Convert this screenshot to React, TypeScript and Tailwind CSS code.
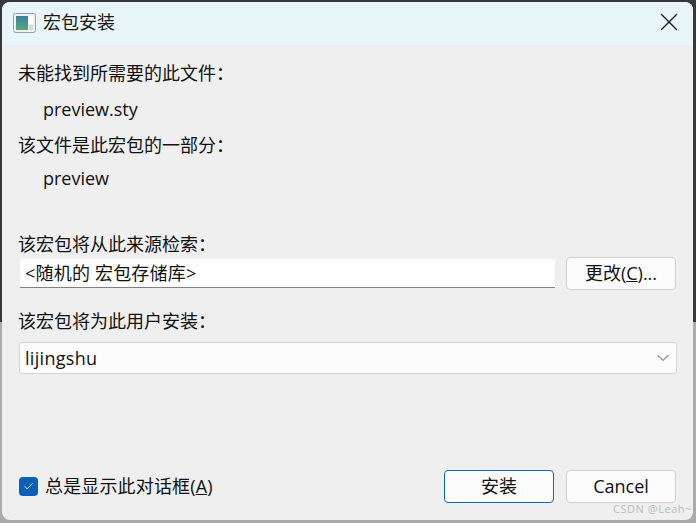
import { ChevronDown, X, Check } from "lucide-react";

const font = "font-['Open_Sans','Noto_Sans_CJK_SC',sans-serif]";

function Label({ children, className = "" }: { children: React.ReactNode; className?: string }) {
  return <div className={`text-[18px] leading-[24px] text-[#111] ${className}`}>{children}</div>;
}

export default function App() {
  return (
    <div className={`${font} h-[523px] w-[696px] overflow-hidden bg-[linear-gradient(#383838_0,#383838_322px,#ababab_322px)] pl-[2px] pr-[3px] pt-[2px] pb-[3px]`}>
      <div className="flex h-full flex-col overflow-hidden rounded-[8px] bg-[#efefef]">
        <div className="flex h-[43px] shrink-0 items-center bg-[#e8f6f9] pb-[2px] pl-[11px] pr-[9px]">
          <svg width="24" height="22" viewBox="0 0 24 22">
            <defs>
              <linearGradient id="pane" x1="0" y1="0" x2="0" y2="1">
                <stop offset="0" stopColor="#3f7fa0" />
                <stop offset="1" stopColor="#55a878" />
              </linearGradient>
            </defs>
            <rect x="0.5" y="1.5" width="22" height="19" rx="2" fill="#eef1f1" stroke="#9aa0a4" />
            <rect x="3" y="4" width="12" height="14" fill="url(#pane)" />
            <rect x="16" y="4" width="4" height="8" fill="#ffffff" />
            <rect x="16" y="13" width="4" height="5" fill="#d5d9d9" />
          </svg>
          <span className="ml-[6px] text-[18px] text-[#1a1a1a]">宏包安装</span>
          <X className="ml-auto -mt-[1px] text-[#1a1a1a]" size={30} strokeWidth={1.1} />
        </div>
        <div className="flex flex-1 flex-col pl-[16px] pr-[17px]">
          <Label className="mt-[16px]">未能找到所需要的此文件：</Label>
          <Label className="mt-[12px] pl-[25px]">preview.sty</Label>
          <Label className="mt-[12px]">该文件是此宏包的一部分：</Label>
          <Label className="mt-[9px] pl-[25px]">preview</Label>
          <Label className="mt-[42px]">该宏包将从此来源检索：</Label>
          <div className="mt-[1px] ml-[2px] flex items-center gap-[11px]">
            <div className="flex h-[29px] w-[535px] items-center border-b border-[#808080] bg-white pl-[5px] text-[18px] text-[#111]">
              <span className="tracking-[0.2px]">&lt;随机的 宏包存储库&gt;</span>
            </div>
            <button className="flex h-[33px] w-[110px] items-center justify-center rounded-[4px] border border-[#d0d0d0] bg-[#fbfbfb] text-[18px] text-[#111]">
              更改(<span className="underline">C</span>)...
            </button>
          </div>
          <Label className="mt-[19px]">该宏包将为此用户安装：</Label>
          <div className="mt-[9px] ml-[1px] flex h-[32px] w-[658px] items-center justify-between rounded-[3px] border border-[#d4d4d4] bg-[#fcfcfc] pl-[5px] pr-[3px] text-[18px] text-[#111]">
            <span className="tracking-[0.3px]">lijingshu</span>
            <ChevronDown size={20} strokeWidth={1.2} className="text-[#444]" />
          </div>
          <div className="mt-auto mb-[17px] flex items-center">
            <span className="ml-[1px] flex h-[19px] w-[19px] items-center justify-center rounded-[4px] bg-[#0a5fb8] text-white">
              <Check size={11} strokeWidth={2} />
            </span>
            <span className="ml-[7px] text-[18px] tracking-[0.15px] text-[#111]">
              总是显示此对话框(<span className="underline">A</span>)
            </span>
            <button className="ml-auto flex h-[33px] w-[110px] items-center justify-center rounded-[4px] border border-[#0a67c0] bg-[#fbfbfb] text-[18px] text-[#111]">
              安装
            </button>
            <button className="ml-[12px] flex h-[33px] w-[110px] items-center justify-center rounded-[4px] border border-[#d0d0d0] bg-[#fbfbfb] text-[18px] text-[#111]">
              Cancel
            </button>
          </div>
        </div>
      </div>
      <span className="absolute right-[4px] top-[503px] text-[11px] leading-[12px] tracking-[0.55px] text-[#bdbdbd]">CSDN @Leah~</span>
    </div>
  );
}
